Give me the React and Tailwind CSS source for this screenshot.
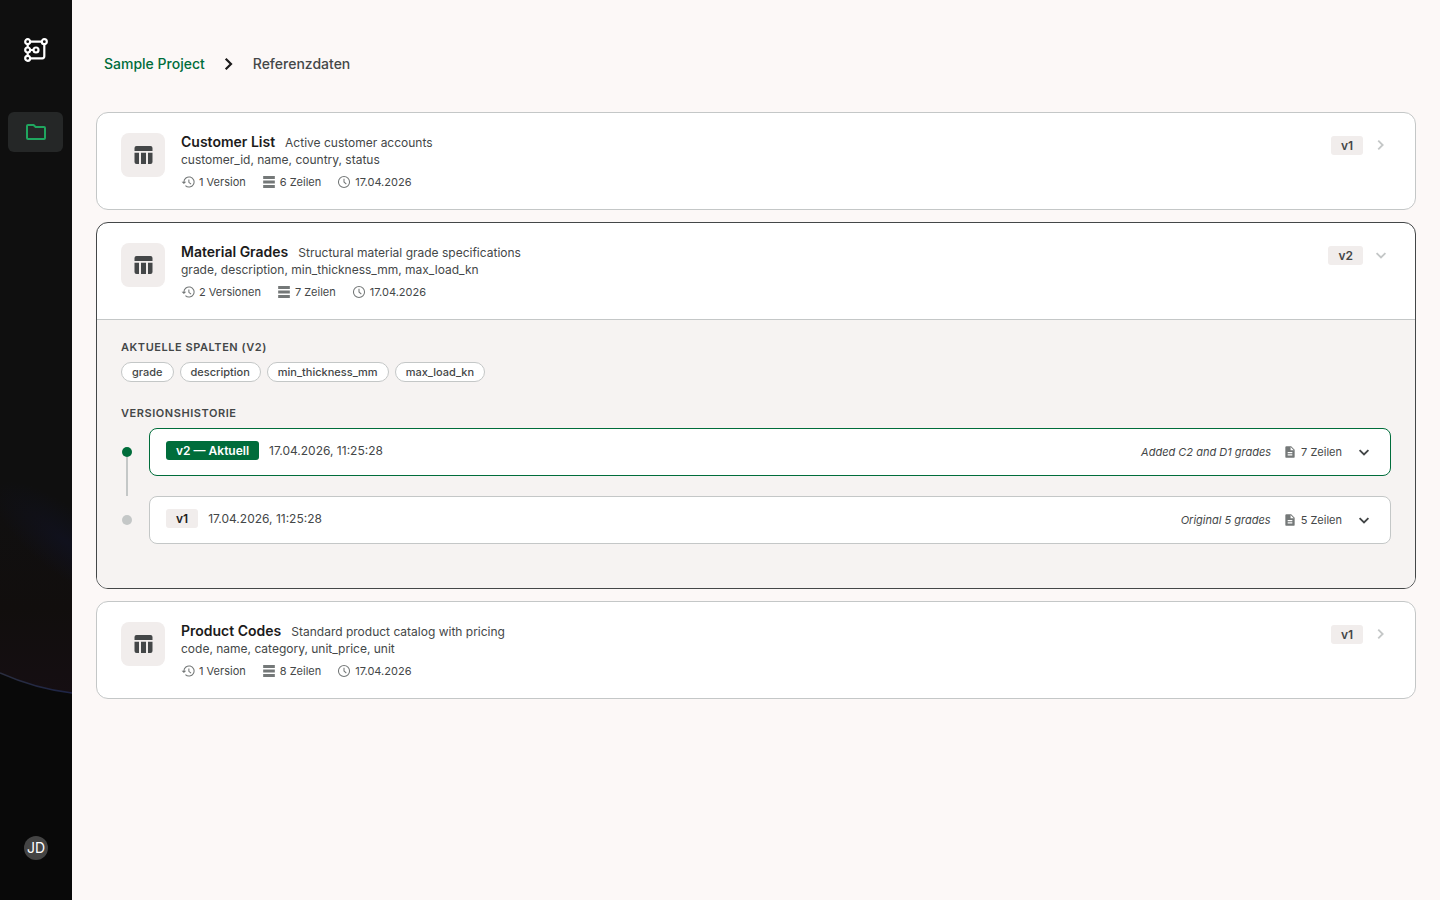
import React, { useState } from 'react';

const tables = [
  {
    id: 'customers',
    name: 'Customer List',
    description: 'Active customer accounts',
    columns: ['customer_id', 'name', 'country', 'status'],
    rows: 6,
    date: '17.04.2026',
    versions: [{ label: 'v1' }],
  },
  {
    id: 'materials',
    name: 'Material Grades',
    description: 'Structural material grade specifications',
    columns: ['grade', 'description', 'min_thickness_mm', 'max_load_kn'],
    rows: 7,
    date: '17.04.2026',
    versions: [
      { label: 'v2', created: '17.04.2026, 11:25:28', note: 'Added C2 and D1 grades', rows: 7 },
      { label: 'v1', created: '17.04.2026, 11:25:28', note: 'Original 5 grades', rows: 5 },
    ],
  },
  {
    id: 'products',
    name: 'Product Codes',
    description: 'Standard product catalog with pricing',
    columns: ['code', 'name', 'category', 'unit_price', 'unit'],
    rows: 8,
    date: '17.04.2026',
    versions: [{ label: 'v1' }],
  },
];

function Icon({ className, children }) {
  return (
    <svg viewBox="0 0 24 24" fill="none" stroke="currentColor" className={className} aria-hidden="true">
      {children}
    </svg>
  );
}

const ChevronRight = ({ className }) => (
  <Icon className={className}><path d="M8.7 6.700 14 12 8.700 17.300" strokeWidth="2.200" /></Icon>
);

const ChevronDown = ({ className }) => (
  <Icon className={className}><path d="M6.700 9.700 12 15 17.300 9.700" strokeWidth="2.200" /></Icon>
);

const TableIcon = ({ className }) => (
  <Icon className={className}>
    <g fill="currentColor" stroke="none">
      <path d="M3.500 8V5a2 2 0 0 1 2-2h14a2 2 0 0 1 2 2v3z" />
      <path d="M8 9.800V21H5.500a2 2 0 0 1-2-2V9.800zM10 9.800h5V21h-5zM17 9.800h4.500V19a2 2 0 0 1-2 2H17z" />
    </g>
  </Icon>
);

const HistoryIcon = ({ className }) => (
  <Icon className={className}>
    <path d="M5 12a8.700 8.700 0 1 1 2.600 6.200M13.500 7.500v5l3.700 3" strokeWidth="1.800" />
    <path d="M1 11.500h8L5 15.500z" fill="currentColor" stroke="none" />
  </Icon>
);

const RowsIcon = ({ className }) => (
  <Icon className={className}>
    <path d="M2 1.700h20v5H2zM2 9.500h20v5H2zM2 17.300h20v5H2z" fill="currentColor" stroke="none" />
  </Icon>
);

const ClockIcon = ({ className }) => (
  <Icon className={className}>
    <circle cx="12" cy="12" r="9.500" strokeWidth="1.800" />
    <path d="M12 6.500V12l4 3.500" strokeWidth="1.800" />
  </Icon>
);

const FileIcon = ({ className }) => (
  <Icon className={className}>
    <path
      d="M14 2H6a2 2 0 0 0-2 2v16a2 2 0 0 0 2 2h12a2 2 0 0 0 2-2V8zm2 16H8v-2h8zm0-4H8v-2h8zm-3-5V3.500L18.500 9z"
      fill="currentColor"
      stroke="none"
    />
  </Icon>
);

function Logo() {
  return (
    <svg viewBox="0 0 24 24" className="w-6 h-6" fill="none" stroke="white" strokeWidth="2.200" aria-hidden="true">
      <circle cx="3.700" cy="3.700" r="2.500" />
      <circle cx="20.300" cy="3.700" r="2.500" />
      <circle cx="3.700" cy="12" r="2.500" />
      <circle cx="12" cy="12" r="2.500" />
      <circle cx="3.700" cy="20.300" r="2.500" />
      <path d="M6.200 3.700h11.600M3.700 6.200v3.300M3.700 14.500v3.300M6.200 12h3.300M20.300 6.200v12.100a2 2 0 0 1-2 2H6.200" />
    </svg>
  );
}

function Sidebar() {
  return (
    <aside className="relative w-[72px] shrink-0 bg-[#0f0f0f] overflow-hidden">
      {/* Planet backdrop */}
      <svg className="absolute bottom-0 left-0 w-[72px] h-[600px]" viewBox="0 0 72 600" aria-hidden="true">
        <defs>
          <radialGradient id="blue">
            <stop offset="0" stopColor="#10111d" />
            <stop offset="1" stopColor="#10111d" stopOpacity="0" />
          </radialGradient>
          <linearGradient id="warm" x1="0" y1="0" x2="0" y2="1">
            <stop offset="0" stopColor="#130f10" stopOpacity="0" />
            <stop offset="0.600" stopColor="#110e0d" />
            <stop offset="1" stopColor="#150e12" />
          </linearGradient>
          <linearGradient id="rim" x1="0" x2="1">
            <stop offset="0" stopColor="#2a2e40" />
            <stop offset="1" stopColor="#1d2447" />
          </linearGradient>
        </defs>
        <path d="M0 180 72 240V393Q36 389 0 373z" fill="url(#warm)" />
        <ellipse cx="66" cy="242" rx="90" ry="32" transform="rotate(38 66 242)" fill="url(#blue)" />
        <path d="M0 373Q36 389 72 393V600H0z" fill="#090909" />
        <path d="M0 373Q36 389 72 393" fill="none" stroke="url(#rim)" strokeWidth="1.500" />
      </svg>

      <div className="relative flex h-full flex-col pt-[38px] pb-10">
        <a href="#home" aria-label="Home" className="mx-auto block">
          <Logo />
        </a>
        <nav className="mt-[50px] pl-2 pr-[9px]">
          <a
            href="#projects"
            aria-label="Projects"
            className="flex h-10 items-center justify-center rounded-md bg-[#252727] text-[#20a65f]"
          >
            <Icon className="w-6 h-6">
              <path d="M3 18V6a1 1 0 0 1 1-1h5.600l2 2H20a1 1 0 0 1 1 1v10a1 1 0 0 1-1 1H4a1 1 0 0 1-1-1z" strokeWidth="2" />
            </Icon>
          </a>
        </nav>
        <button className="mx-auto mt-auto flex w-6 h-6 items-center justify-center rounded-full bg-[#444444] text-sm text-white">
          JD
        </button>
      </div>
    </aside>
  );
}

function Badge({ className, children }) {
  return (
    <span className={`rounded-[3px] px-[10px] py-[2px] text-xs leading-[15px] font-semibold ${className}`}>
      {children}
    </span>
  );
}

function Meta({ icon, children }) {
  return (
    <span className="flex items-center gap-1">
      <span className="text-[#747878]">{icon}</span>
      {children}
    </span>
  );
}

function SectionTitle({ children }) {
  return (
    <h3 className="text-[11px] leading-[14px] font-semibold uppercase tracking-wider text-[#444748]">
      {children}
    </h3>
  );
}

function VersionEntry({ version, current, last }) {
  return (
    <li className="flex gap-4">
      {/* Timeline marker */}
      <div className="flex w-3 flex-col items-center pt-[19px]">
        <span className={`w-[10px] h-[10px] shrink-0 rounded-full ${current ? 'bg-[#006d3b]' : 'bg-[#c4c7c7]'}`} />
        {!last && <span className="w-[2px] flex-1 bg-[#c4c7c7]" />}
      </div>

      <div
        className={`mb-5 flex flex-1 items-start justify-between rounded-lg border bg-white px-4 py-3 ${
          current ? 'border-[#006d3b]' : 'border-[#c4c7c7]'
        }`}
      >
        <div className="flex items-center gap-[10px] text-xs leading-[15px]">
          <Badge className={current ? 'bg-[#006d3b] text-white' : 'bg-[#f1edec] text-[#1c1b1b]'}>
            {current ? `${version.label} — Aktuell` : version.label}
          </Badge>
          <span>{version.created}</span>
        </div>
        <div className="flex h-[22px] items-center gap-3 text-[11px] leading-[14px]">
          <em>{version.note}</em>
          <Meta icon={<FileIcon className="w-[14px] h-[14px]" />}>{version.rows} Zeilen</Meta>
          <button aria-label={`${version.label} anzeigen`}>
            <ChevronDown className="w-5 h-5" />
          </button>
        </div>
      </div>
    </li>
  );
}

function TableCard({ table, open, onToggle }) {
  const count = table.versions.length;

  return (
    <section
      className={`overflow-hidden rounded-xl border bg-white ${open ? 'border-[#444748]' : 'border-[#c4c7c7]'}`}
    >
      <button onClick={onToggle} aria-expanded={open} className="flex w-full items-start gap-4 px-6 py-5 text-left">
        <span className="flex w-11 h-11 shrink-0 items-center justify-center rounded-lg bg-[#f1edec]">
          <TableIcon className="w-6 h-6" />
        </span>

        <span className="flex min-w-0 flex-1 flex-col">
          <span className="flex h-[18px] items-baseline gap-[10px] leading-[18px]">
            <span className="text-sm leading-[18px] font-semibold text-[#1c1b1b]">{table.name}</span>
            <span className="text-xs leading-[18px]">{table.description}</span>
          </span>
          <span className="text-xs leading-[18px]">{table.columns.join(', ')}</span>
          <span className="mt-[6px] flex gap-4 text-[11px] leading-[14px]">
            <Meta icon={<HistoryIcon className="w-[14px] h-[14px]" />}>
              {count} {count === 1 ? 'Version' : 'Versionen'}
            </Meta>
            <Meta icon={<RowsIcon className="w-[14px] h-[14px]" />}>{table.rows} Zeilen</Meta>
            <Meta icon={<ClockIcon className="w-[14px] h-[14px]" />}>{table.date}</Meta>
          </span>
        </span>

        <span className="flex h-6 items-center gap-2">
          <Badge className="bg-[#f1edec]">{table.versions[0].label}</Badge>
          {open ? (
            <ChevronDown className="w-5 h-5 text-[#c4c7c7]" />
          ) : (
            <ChevronRight className="w-5 h-5 text-[#c4c7c7]" />
          )}
        </span>
      </button>

      {open && (
        <div className="border-t border-[#c4c7c7] bg-[#f6f3f2] px-6 pt-5 pb-6">
          <SectionTitle>Aktuelle Spalten ({table.versions[0].label})</SectionTitle>
          <ul className="mt-2 mb-6 flex flex-wrap gap-[6px]">
            {table.columns.map((column) => (
              <li
                key={column}
                className="rounded-full border border-[#c4c7c7] bg-white px-[10px] py-[2px] text-[11px] leading-[14px] font-medium"
              >
                {column}
              </li>
            ))}
          </ul>

          <SectionTitle>Versionshistorie</SectionTitle>
          <ol className="mt-2">
            {table.versions.map((version, i) => (
              <VersionEntry key={version.label} version={version} current={i === 0} last={i === count - 1} />
            ))}
          </ol>
        </div>
      )}
    </section>
  );
}

export default function App() {
  const [openId, setOpenId] = useState('materials');

  return (
    <div className="flex min-h-screen bg-[#fcf8f7] font-[Inter,sans-serif] text-[#444748]">
      <Sidebar />
      <main className="min-w-0 flex-1 px-6 pt-[52px] pb-6">
        <nav aria-label="Breadcrumb" className="flex h-6 items-center gap-3 px-2 text-sm font-medium">
          <a href="#project" className="text-[#006d3b]">Sample Project</a>
          <ChevronRight className="w-6 h-6 text-[#1c1b1b]" />
          <span>Referenzdaten</span>
        </nav>

        <div className="mt-9 flex flex-col gap-3">
          {tables.map((table) => (
            <TableCard
              key={table.id}
              table={table}
              open={openId === table.id}
              onToggle={() => setOpenId(openId === table.id ? null : table.id)}
            />
          ))}
        </div>
      </main>
    </div>
  );
}
